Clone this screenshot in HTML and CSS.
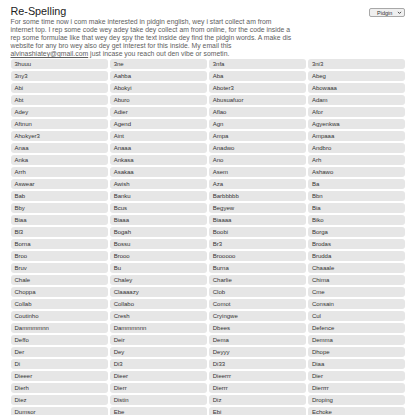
FILE: index.html
```html
<!DOCTYPE html>
<html lang="en">
<head>
<meta charset="utf-8">
<title>Re-Spelling</title>
<link rel="stylesheet" href="styles.css">
</head>
<body>
<div class="page">
  <header class="header">
    <div class="intro">
      <h1 class="title">Re-Spelling</h1>
      <p class="desc">For some time now i com make interested in pidgin english, wey i start collect am from internet top. I rep some code wey adey take dey collect am from online, for the code inside a rep some formulae like that wey dey spy the text inside dey find the pidgin words. A make dis website for any bro wey also dey get interest for this inside. My email this <a class="mail" href="#">alvinashiatey@gmail.com</a> just incase you reach out den vibe or sometin.</p>
    </div>
    <div class="select"><span>Pidgin</span><svg class="chev" viewBox="0 0 8 8" width="5" height="5"><path d="M1.5 3 L4 5.5 L6.5 3" fill="none" stroke="#333" stroke-width="1.4"/></svg></div>
  </header>
  <div class="grid">
    <div class="cell">3huuu</div><div class="cell">3ne</div><div class="cell">3nfa</div><div class="cell">3ni3</div>
    <div class="cell">3ny3</div><div class="cell">Aahba</div><div class="cell">Aba</div><div class="cell">Abeg</div>
    <div class="cell">Abi</div><div class="cell">Abokyi</div><div class="cell">Aboter3</div><div class="cell">Abowaaa</div>
    <div class="cell">Abt</div><div class="cell">Aburo</div><div class="cell">Abusuafuor</div><div class="cell">Adam</div>
    <div class="cell">Adey</div><div class="cell">Adier</div><div class="cell">Aflao</div><div class="cell">Afor</div>
    <div class="cell">Aftnun</div><div class="cell">Agend</div><div class="cell">Agn</div><div class="cell">Agyenkwa</div>
    <div class="cell">Ahokyer3</div><div class="cell">Aint</div><div class="cell">Ampa</div><div class="cell">Ampaaa</div>
    <div class="cell">Anaa</div><div class="cell">Anaaa</div><div class="cell">Anadwo</div><div class="cell">Andbro</div>
    <div class="cell">Anka</div><div class="cell">Ankasa</div><div class="cell">Ano</div><div class="cell">Arh</div>
    <div class="cell">Arrh</div><div class="cell">Asakaa</div><div class="cell">Asem</div><div class="cell">Ashawo</div>
    <div class="cell">Aswear</div><div class="cell">Awish</div><div class="cell">Aza</div><div class="cell">Ba</div>
    <div class="cell">Bab</div><div class="cell">Banku</div><div class="cell">Barbbbbb</div><div class="cell">Bbn</div>
    <div class="cell">Bby</div><div class="cell">Bcus</div><div class="cell">Begyew</div><div class="cell">Bia</div>
    <div class="cell">Biaa</div><div class="cell">Biaaa</div><div class="cell">Biaaaa</div><div class="cell">Biko</div>
    <div class="cell">Bl3</div><div class="cell">Bogah</div><div class="cell">Boobi</div><div class="cell">Borga</div>
    <div class="cell">Borna</div><div class="cell">Bossu</div><div class="cell">Br3</div><div class="cell">Brodas</div>
    <div class="cell">Broo</div><div class="cell">Brooo</div><div class="cell">Brooooo</div><div class="cell">Brudda</div>
    <div class="cell">Bruv</div><div class="cell">Bu</div><div class="cell">Burna</div><div class="cell">Chaaale</div>
    <div class="cell">Chale</div><div class="cell">Chaley</div><div class="cell">Charlie</div><div class="cell">Chima</div>
    <div class="cell">Choppa</div><div class="cell">Claaaazy</div><div class="cell">Clob</div><div class="cell">Cme</div>
    <div class="cell">Collab</div><div class="cell">Collabo</div><div class="cell">Comot</div><div class="cell">Consain</div>
    <div class="cell">Coutinho</div><div class="cell">Cresh</div><div class="cell">Cryingwe</div><div class="cell">Cul</div>
    <div class="cell">Dammmmnn</div><div class="cell">Dammmnnn</div><div class="cell">Dbees</div><div class="cell">Defence</div>
    <div class="cell">Deffo</div><div class="cell">Deir</div><div class="cell">Dema</div><div class="cell">Demma</div>
    <div class="cell">Der</div><div class="cell">Dey</div><div class="cell">Deyyy</div><div class="cell">Dhope</div>
    <div class="cell">Di</div><div class="cell">Di3</div><div class="cell">Di33</div><div class="cell">Diaa</div>
    <div class="cell">Dieeer</div><div class="cell">Dieer</div><div class="cell">Dieerrr</div><div class="cell">Dier</div>
    <div class="cell">Dierh</div><div class="cell">Dierr</div><div class="cell">Dierrr</div><div class="cell">Dierrrr</div>
    <div class="cell">Diez</div><div class="cell">Distin</div><div class="cell">Diz</div><div class="cell">Droping</div>
    <div class="cell">Dumsor</div><div class="cell">Ebe</div><div class="cell">Ebi</div><div class="cell">Echoke</div>
  </div>
</div>
</body>
</html>
```

FILE: styles.css
```css
html, body {
  margin: 0;
  padding: 0;
  overflow: hidden;
  background: #ffffff;
}
.page {
  padding: 4px 10px 0 10.5px;
  font-family: "Liberation Sans", Arial, Helvetica, sans-serif;
}
.header {
  display: flex;
  justify-content: space-between;
  align-items: flex-start;
}
.title {
  margin: 1px 0 0 0;
  font-size: 10.8px;
  line-height: 13px;
  font-weight: 400;
  color: #222222;
}
.desc {
  margin: 0 0 1px 0;
  width: 285px;
  font-size: 6.85px;
  line-height: 8px;
  color: #5e5e5e;
}
.mail {
  color: #5e5e5e;
  text-decoration: underline;
}
.select {
  box-sizing: border-box;
  margin-top: 4px;
  width: 36px;
  height: 9px;
  border: 1px solid #a8a8a8;
  border-radius: 2px;
  background: #efefef;
  display: flex;
  align-items: center;
  justify-content: space-between;
  padding: 0 2px 0 7px;
  font-size: 5.5px;
  color: #333333;
}
.chev {
  display: block;
}
.grid {
  display: grid;
  grid-template-columns: repeat(4, 1fr);
  gap: 2px;
}
.cell {
  height: 10px;
  line-height: 10px;
  background: #e6e6e6;
  border-radius: 3px;
  padding-left: 4px;
  font-size: 6px;
  color: #333333;
  white-space: nowrap;
  overflow: hidden;
}
```
